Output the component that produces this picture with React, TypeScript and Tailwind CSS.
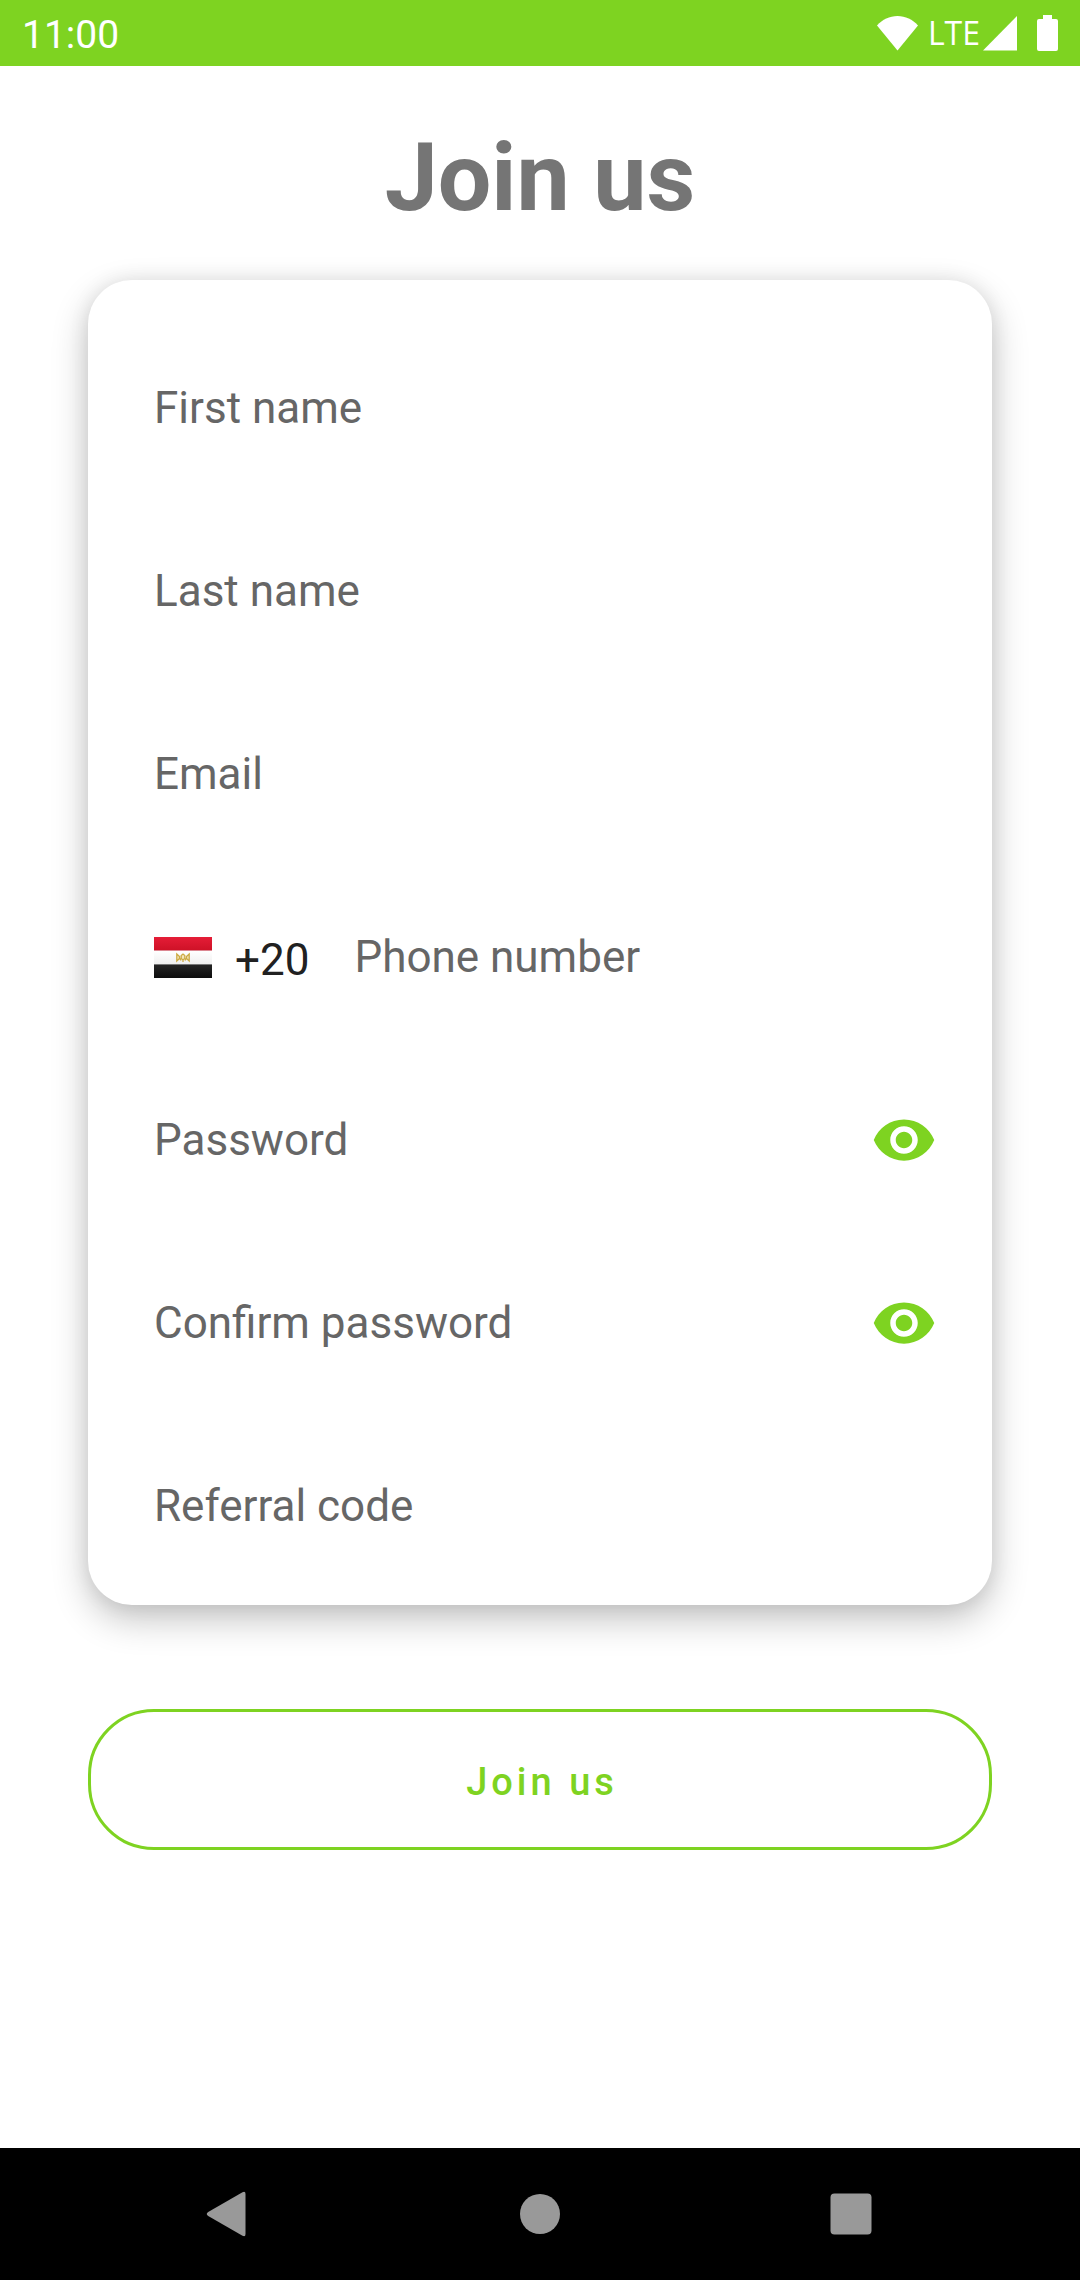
import { useState } from 'react';

const inputClass =
  'peer col-start-1 row-start-1 h-full w-full min-w-0 bg-transparent text-[44px] text-[#212121] outline-none';
const labelClass =
  'pointer-events-none col-start-1 row-start-1 self-center text-[44px] leading-[52px] text-[#666666] peer-[:not(:placeholder-shown)]:invisible';

function StatusBar() {
  return (
    <header className="flex h-[66px] items-center justify-between bg-[#7ed321] px-[22px] text-white">
      <time className="pt-[4px] text-[39px] leading-[46px]">11:00</time>
      <div className="flex items-center">
        <svg className="h-[35px] w-[41px]" viewBox="0 0 41 35" fill="currentColor" aria-label="Wi-Fi">
          <path d="M0 9.500C5.500 3.500 12.500 0 20.500 0S35.500 3.500 41 9.500L20.500 34.500z" />
        </svg>
        <span className="ml-[10px] font-['Open_Sans',sans-serif] text-[32px] leading-[40px]">LTE</span>
        <svg className="ml-[3px] h-[35px] w-[34px]" viewBox="0 0 34 35" fill="currentColor" aria-label="Signal">
          <path d="M34 0V34.500H0z" />
        </svg>
        <svg className="ml-[20px] h-[36px] w-[21px]" viewBox="0 0 21 36" fill="currentColor" aria-label="Battery">
          <path d="M6 0h9v4h4a2 2 0 0 1 2 2v28a2 2 0 0 1-2 2H2a2 2 0 0 1-2-2V6a2 2 0 0 1 2-2h4z" />
        </svg>
      </div>
    </header>
  );
}

function EgyptFlag() {
  return (
    <svg className="h-[41px] w-[58px] shrink-0" viewBox="0 0 58 41" role="img" aria-label="Egypt">
      <defs>
        <linearGradient id="red" x1="0" y1="0" x2="0" y2="1">
          <stop offset="0" stopColor="#e51d37" />
          <stop offset="1" stopColor="#cd1126" />
        </linearGradient>
        <linearGradient id="white" x1="0" y1="0" x2="0" y2="1">
          <stop offset="0" stopColor="#ffffff" />
          <stop offset="1" stopColor="#f0f0f0" />
        </linearGradient>
        <linearGradient id="black" x1="0" y1="0" x2="0" y2="1">
          <stop offset="0" stopColor="#262626" />
          <stop offset="1" stopColor="#0d0d0d" />
        </linearGradient>
      </defs>
      <rect width="58" height="14" fill="url(#red)" />
      <rect y="14" width="58" height="13" fill="url(#white)" />
      <rect y="27" width="58" height="14" fill="url(#black)" />
      <rect y="13" width="58" height="1" fill="#dc8791" />
      <rect y="27" width="58" height="1" fill="#777777" />
      <path
        d="M22.800 17v7l2.700-2.500v-2zM35.200 17v7l-2.700-2.500v-2zM25.500 21l1.500 2.500M32.500 21L31 23.500M27.200 21.500v-3l1.800-1.500 1.800 1.500v3L29 23zM29 22v3"
        fill="#f3e6bd"
        stroke="#cdab44"
        strokeWidth="1.300"
      />
    </svg>
  );
}

function Eye() {
  return (
    <svg className="size-[66px]" viewBox="0 0 24 24" fill="#7ed321" aria-hidden="true">
      <path d="M12 4.500C7 4.500 2.730 7.610 1 12c1.730 4.390 6 7.500 11 7.500s9.270-3.110 11-7.500c-1.730-4.390-6-7.500-11-7.500zM12 17c-2.760 0-5-2.240-5-5s2.240-5 5-5 5 2.240 5 5-2.240 5-5 5zm0-8c-1.660 0-3 1.340-3 3s1.340 3 3 3 3-1.340 3-3-1.340-3-3-3z" />
    </svg>
  );
}

function TextInput({ id, label, type = 'text' }: { id: string; label: string; type?: string }) {
  return (
    <div className="grid h-full min-w-0 flex-1">
      <input id={id} type={type} placeholder=" " className={inputClass} />
      <label htmlFor={id} className={labelClass}>{label}</label>
    </div>
  );
}

function Field({ id, label, type }: { id: string; label: string; type?: string }) {
  return (
    <div className="flex h-[183px] items-center">
      <TextInput id={id} label={label} type={type} />
    </div>
  );
}

function PasswordField({ id, label }: { id: string; label: string }) {
  const [visible, setVisible] = useState(false);
  return (
    <div className="-mr-[11px] flex h-[183px] items-center">
      <TextInput id={id} label={label} type={visible ? 'text' : 'password'} />
      <button
        type="button"
        aria-label={'Show ' + label.toLowerCase()}
        aria-pressed={visible}
        onClick={() => setVisible(!visible)}
      >
        <Eye />
      </button>
    </div>
  );
}

function PhoneField() {
  return (
    <div className="flex h-[183px] items-center gap-[45px]">
      <button
        type="button"
        aria-label="Country code +20"
        className="flex items-center gap-[23px] pt-[2px] text-[44px] leading-[52px] text-[#212121]"
      >
        <EgyptFlag />
        <span className="pt-[4px]">+20</span>
      </button>
      <TextInput id="phone" label="Phone number" type="tel" />
    </div>
  );
}

function NavigationBar() {
  return (
    <nav className="grid h-[132px] grid-cols-3 items-center justify-items-center bg-black px-[74px] text-[#999999]">
      <button type="button" aria-label="Back">
        <svg className="size-[46px]" viewBox="0 0 46 46" fill="currentColor">
          <path d="M36.500 1.200Q39.500-.3 39.500 3v40q0 3.300-3 1.800L2.200 25Q-.7 23 2.200 21z" />
        </svg>
      </button>
      <button type="button" aria-label="Home">
        <svg className="size-[46px]" viewBox="0 0 46 46" fill="currentColor">
          <circle cx="23" cy="23" r="20" />
        </svg>
      </button>
      <button type="button" aria-label="Recent apps">
        <svg className="size-[46px]" viewBox="0 0 46 46" fill="currentColor">
          <rect x="2.500" y="2.500" width="41" height="41" rx="4" />
        </svg>
      </button>
    </nav>
  );
}

export default function App() {
  return (
    <div className="flex min-h-screen flex-col bg-white font-['Roboto',sans-serif]">
      <StatusBar />
      <main className="flex-1 px-[88px] pt-[56px]">
        <h1 className="text-center text-[95px] font-bold leading-[112px] text-[#757575]">Join us</h1>
        <form onSubmit={(e) => e.preventDefault()}>
          <div className="mt-[46px] rounded-[44px] bg-white px-[66px] pb-[8px] pt-[36px] shadow-[0_14px_36px_rgba(0,0,0,0.24),0_0_20px_rgba(0,0,0,0.08)]">
            <Field id="first-name" label="First name" />
            <Field id="last-name" label="Last name" />
            <Field id="email" label="Email" type="email" />
            <PhoneField />
            <PasswordField id="password" label="Password" />
            <PasswordField id="confirm-password" label="Confirm password" />
            <Field id="referral-code" label="Referral code" />
          </div>
          <button
            type="submit"
            className="mt-[104px] h-[141px] w-full rounded-[66px] border-[3px] border-[#7ed321] pl-[4px] pt-[6px] text-[38px] font-medium tracking-[4px] text-[#7ed321]"
          >
            Join us
          </button>
        </form>
      </main>
      <NavigationBar />
    </div>
  );
}
